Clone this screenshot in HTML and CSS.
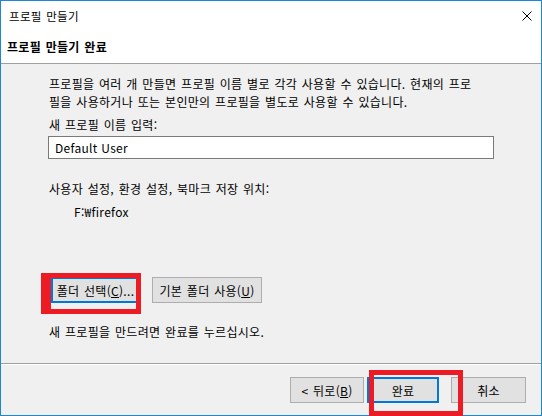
FILE: index.html
```html
<!DOCTYPE html>
<html lang="ko">
<head>
  <meta charset="UTF-8" />
  <title>프로필 만들기</title>
  <link rel="stylesheet" href="styles.css">
</head>
<body>
  <div class="window">
    <div class="titlebar">
      <span class="title">프로필 만들기</span>
      <svg class="close" width="10" height="10" viewBox="0 0 10 10">
        <path d="M0.5 0.5 L9.5 9.5 M9.5 0.5 L0.5 9.5" stroke="#000" stroke-width="1" fill="none" />
      </svg>
    </div>

    <div class="header">프로필 만들기 완료</div>

    <div class="content">
      <p class="intro">프로필을 여러 개 만들면 프로필 이름 별로 각각 사용할 수 있습니다. 현재의 프로<br>필을 사용하거나 또는 본인만의 프로필을 별도로 사용할 수 있습니다.</p>

      <div class="label">새 프로필 이름 입력:</div>
      <input class="name-input" type="text" value="Default User" />

      <div class="label location">사용자 설정, 환경 설정, 북마크 저장 위치:</div>
      <div class="path">F:₩firefox</div>

      <div class="folder-row">
        <button class="btn focused choose">폴더 선택(<u>C</u>)...</button>
        <button class="btn default-folder">기본 폴더 사용(<u>U</u>)</button>
      </div>

      <div class="label finish-note">새 프로필을 만드려면 완료를 누르십시오.</div>
    </div>

    <div class="footer">
      <button class="btn back">&lt; 뒤로(<u>B</u>)</button>
      <button class="btn focused finish">완료</button>
      <button class="btn cancel">취소</button>
    </div>
  </div>

  <!-- annotation boxes drawn over the dialog -->
  <div class="mark mark-folder"></div>
  <div class="mark mark-finish"></div>
</body>
</html>
```

FILE: styles.css
```css
body {
  margin: 0;
  position: relative;
  width: 542px;
  height: 416px;
  overflow: hidden;
  font-family: "Noto Sans CJK KR", "Noto Sans", sans-serif;
  font-size: 12px;
  color: #000;
  word-spacing: 1px;
  letter-spacing: 0.3px;
}
.window {
  box-sizing: border-box;
  width: 542px;
  height: 416px;
  border: 1px solid #1c86d9;
  background: #f0f0f0;
  display: flex;
  flex-direction: column;
}
.titlebar {
  height: 30px;
  background: #fff;
  display: flex;
  align-items: center;
  justify-content: space-between;
  padding: 0 9px 0 8px;
}
.title {
  font-size: 11.5px;
  line-height: 16px;
}
.close {
  display: block;
  margin-top: -1px;
}
.header {
  height: 32px;
  background: #fff;
  border-bottom: 1px solid #a0a0a0;
  padding-left: 6px;
  font-weight: bold;
  line-height: 32px;
}
.content {
  flex: 1;
  padding: 0 47px 0 48px;
  line-height: 18px;
}
.intro {
  margin: 11px 0 0;
}
.label {
  margin-top: 5px;
}
.name-input {
  display: block;
  box-sizing: border-box;
  width: 446px;
  height: 23px;
  margin: 2px 0 0 -1px;
  padding: 0 6px;
  border: 1px solid #7a7a7a;
  background: #fff;
  font-family: inherit;
  font-size: 12px;
  letter-spacing: 0.3px;
  outline: none;
}
.location {
  margin-top: 21px;
}
.path {
  margin-top: 5px;
  padding-left: 25px;
}
.folder-row {
  display: flex;
  gap: 12px;
  margin: 56px 0 0 2px;
}
.finish-note {
  margin-top: 20px;
}
.btn {
  box-sizing: border-box;
  height: 26px;
  padding: 0;
  border: 1px solid #adadad;
  background: #e1e1e1;
  font-family: inherit;
  font-size: 12px;
  color: #000;
  word-spacing: 1px;
  letter-spacing: 0.3px;
  white-space: nowrap;
}
.btn.focused {
  border: 2px solid #0078d7;
}
.choose {
  width: 89px;
}
.default-folder {
  width: 110px;
}
.footer {
  height: 52px;
  border-top: 1px solid #a0a0a0;
  box-shadow: inset 0 1px #fff;
  display: flex;
  justify-content: flex-end;
  align-items: flex-start;
  padding: 13px 15px 0 0;
  box-sizing: border-box;
}
.back {
  width: 74px;
  margin-right: 3px;
}
.finish {
  width: 72px;
  margin-right: 12px;
}
.cancel {
  width: 75px;
}
.mark {
  position: absolute;
  box-sizing: border-box;
  border: 5px solid #ed1c24;
}
.mark-folder {
  left: 41px;
  top: 273px;
  width: 100px;
  height: 41px;
  border-left-width: 10px;
}
.mark-finish {
  left: 369px;
  top: 370px;
  width: 94px;
  height: 46px;
}
```
